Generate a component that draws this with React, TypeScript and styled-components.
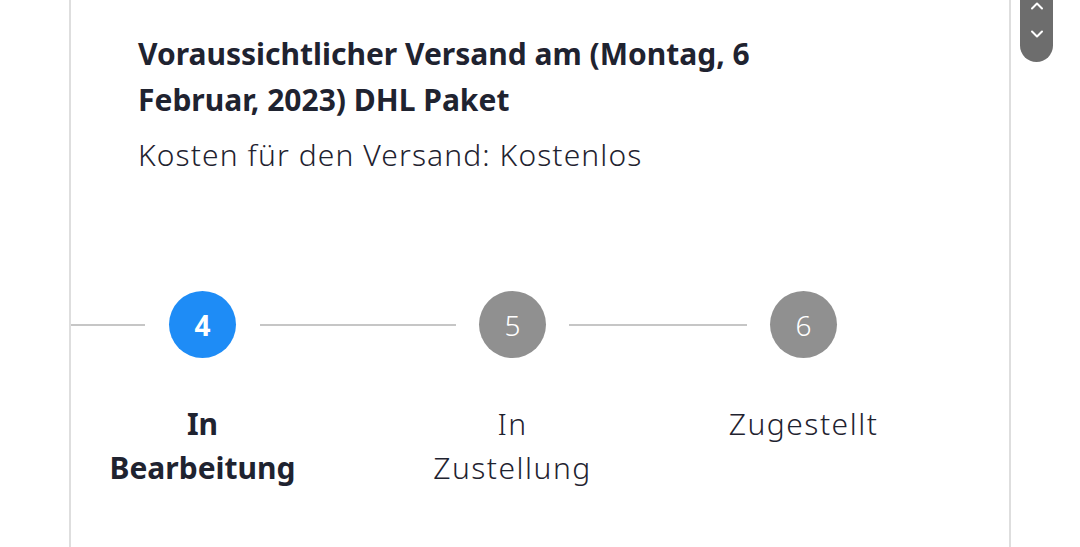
import React from 'react';
import styled, { createGlobalStyle } from 'styled-components';

const GlobalStyle = createGlobalStyle`
  html, body {
    margin: 0;
    padding: 0;
    background: #ffffff;
  }
  body {
    font-family: "Noto Sans", Roboto, sans-serif;
    color: #1f2330;
    overflow: hidden;
  }
`;

const Page = styled.div`
  position: relative;
  width: 1080px;
  height: 547px;
  overflow: hidden;
  background: #ffffff;
`;

const Card = styled.section`
  margin-left: 69px;
  width: 942px;
  height: 547px;
  box-sizing: border-box;
  border-left: 2px solid #dedede;
  border-right: 2px solid #dedede;
  padding-top: 31px;
`;

const Info = styled.div`
  padding-left: 67px;
`;

const Title = styled.h2`
  margin: 0;
  width: 660px;
  font-size: 30px;
  line-height: 46px;
  font-weight: 700;
  color: #1f2330;
`;

const Subtitle = styled.p`
  margin: 10px 0 0;
  font-size: 30px;
  line-height: 44px;
  font-weight: 300;
  letter-spacing: 1.1px;
  color: #1f2330;
`;

const Stepper = styled.div`
  display: flex;
  align-items: flex-start;
  margin-top: 114px;
`;

const Line = styled.div<{ $w: number }>`
  flex: none;
  width: ${({ $w }) => $w}px;
  height: 2px;
  margin-top: 33px;
  background: #c6c6c6;
`;

const Step = styled.div<{ $gapL: number; $gapR: number }>`
  flex: none;
  width: 67px;
  margin: 0 ${({ $gapR }) => $gapR}px 0 ${({ $gapL }) => $gapL}px;
  display: flex;
  flex-direction: column;
  align-items: center;
`;

const Circle = styled.div<{ $active?: boolean }>`
  width: 67px;
  height: 67px;
  border-radius: 50%;
  background: ${({ $active }) => ($active ? '#1e8cf6' : '#909090')};
  color: #ffffff;
  display: flex;
  align-items: center;
  justify-content: center;
  font-size: 28px;
  font-weight: ${({ $active }) => ($active ? 700 : 300)};
`;

const Label = styled.div<{ $active?: boolean }>`
  flex: none;
  width: 240px;
  margin-top: 44px;
  text-align: center;
  white-space: pre-line;
  font-size: 30px;
  line-height: 44px;
  font-weight: ${({ $active }) => ($active ? 700 : 300)};
  letter-spacing: ${({ $active }) => ($active ? 0 : 1.5)}px;
  color: #1f2330;
`;

const ScrollPill = styled.div`
  position: absolute;
  top: -20px;
  left: 1020px;
  width: 33px;
  height: 82px;
  border-radius: 0 0 17px 17px;
  background: #6d6d6d;
  display: flex;
  flex-direction: column;
  align-items: center;
  justify-content: flex-end;
  gap: 20px;
  padding-bottom: 23px;
  box-sizing: border-box;
`;

const Chevron = ({ up }: { up?: boolean }) => (
  <svg width="14" height="9" viewBox="0 0 14 9" fill="none">
    <path
      d={up ? 'M2 7.5 L7 2.5 L12 7.5' : 'M2 1.5 L7 6.5 L12 1.5'}
      stroke="#ffffff"
      strokeWidth="2"
      strokeLinecap="round"
      strokeLinejoin="round"
    />
  </svg>
);

export default function App() {
  return (
    <Page>
      <GlobalStyle />
      <Card>
        <Info>
          <Title>Voraussichtlicher Versand am (Montag, 6 Februar, 2023) DHL Paket</Title>
          <Subtitle>Kosten für den Versand: Kostenlos</Subtitle>
        </Info>
        <Stepper>
          <Line $w={74} />
          <Step $gapL={24} $gapR={24}>
            <Circle $active>4</Circle>
            <Label $active>{'In\nBearbeitung'}</Label>
          </Step>
          <Line $w={196} />
          <Step $gapL={23} $gapR={23}>
            <Circle>5</Circle>
            <Label>{'In\nZustellung'}</Label>
          </Step>
          <Line $w={178} />
          <Step $gapL={23} $gapR={0}>
            <Circle>6</Circle>
            <Label>Zugestellt</Label>
          </Step>
        </Stepper>
      </Card>
      <ScrollPill>
        <Chevron up />
        <Chevron />
      </ScrollPill>
    </Page>
  );
}
